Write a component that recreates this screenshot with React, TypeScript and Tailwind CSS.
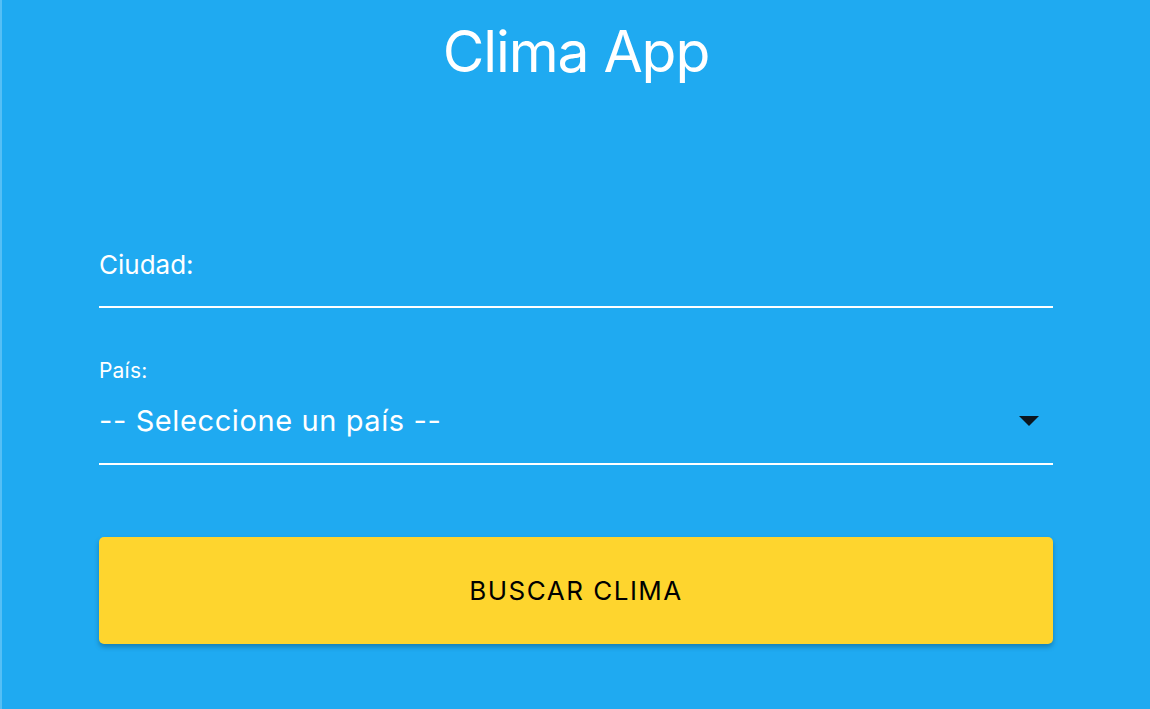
import React from 'react';

const App: React.FC = () => {
  return (
    <div
      className="min-h-[709px] bg-[#1faaf1] border-l-2 border-[#55bff5] text-white"
      style={{ fontFamily: 'Inter, "Noto Sans", sans-serif' }}
    >
      <div className="w-[954px] mx-auto">
        <h1 className="text-center text-[57px] leading-[57px] tracking-[-1.1px] pt-[23px] font-normal">Clima App</h1>

        <form className="pt-[168px]" onSubmit={(e) => e.preventDefault()}>
          <div className="border-b-2 border-white pb-[24px]">
            <label className="block text-[26px] leading-[34px]">Ciudad:</label>
          </div>

          <div className="mt-[50px]">
            <label className="block text-[21px] leading-[26px] tracking-[0.2px]">País:</label>
            <div className="flex items-center justify-between border-b-2 border-white mt-[20px] pb-[25px]">
              <span className="text-[29px] leading-[34px] tracking-[0.6px]">-- Seleccione un país --</span>
              <svg width="20" height="10" viewBox="0 0 20 10" className="mr-[14px]">
                <path d="M0 0 L20 0 L10 10 Z" fill="#0b1620" />
              </svg>
            </div>
          </div>

          <button
            type="submit"
            className="mt-[72px] w-full h-[107px] bg-[#fed52e] rounded-[5px] text-black text-[26px] tracking-[1.5px] shadow-[0_3px_5px_rgba(0,0,0,0.25)]"
          >
            BUSCAR CLIMA
          </button>
        </form>
      </div>
    </div>
  );
};

export default App;
